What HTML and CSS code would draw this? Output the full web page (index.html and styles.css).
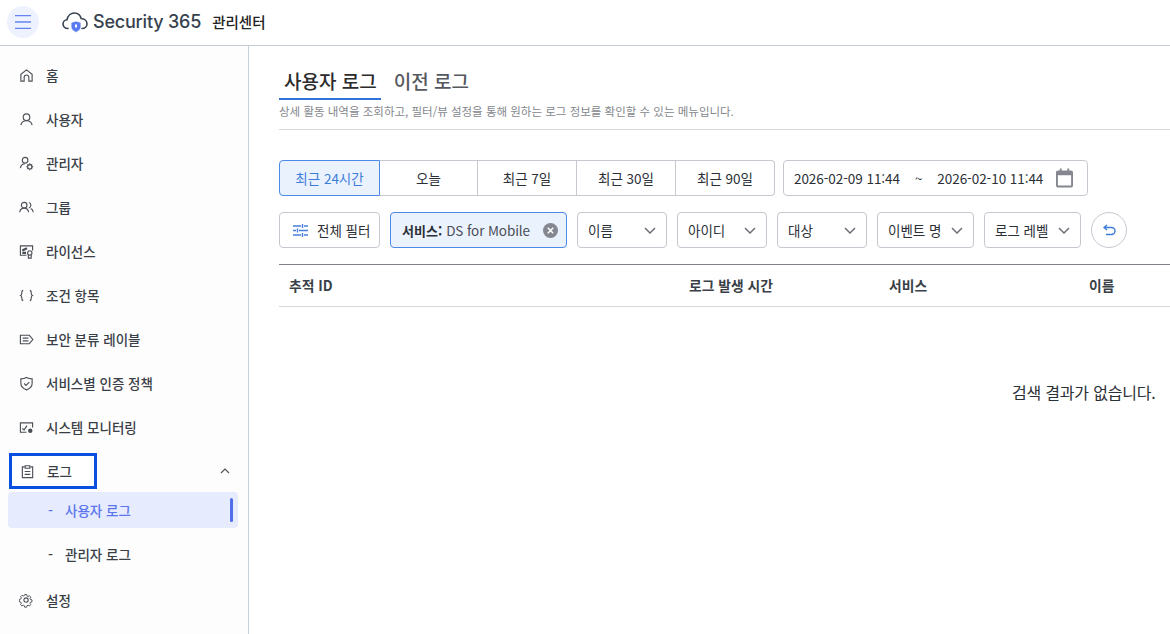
FILE: index.html
```html
<!DOCTYPE html>
<html lang="ko">
<head>
<meta charset="utf-8">
<title>Security 365 관리센터</title>
<link rel="stylesheet" href="styles.css">
</head>
<body>
<header class="topbar">
  <button class="menu-btn" aria-label="메뉴">
    <svg width="16" height="14" viewBox="0 0 16 14"><path d="M0 1h16M0 7.500h16M0 14h16" stroke="#6685f5" stroke-width="1.500" fill="none" transform="translate(0 -.5)"/></svg>
  </button>
  <div class="brand">
    <svg class="logo" width="26" height="22" viewBox="0 0 26 22" fill="none">
      <path d="M6 17.500C3 17.500 1 15.500 1 13c0-2.500 2-4.200 4-4.300C5.800 4.500 9 2 12.300 2c3.500 0 6 2.300 6.900 5.500 3 .2 5.800 2.300 5.800 5.300 0 2.700-2.200 4.700-5 4.700" stroke="#36424f" stroke-width="1.600" stroke-linecap="round"/>
      <path d="M9 11.500l5-1.500 5 1.500v4.500c0 2.500-2.500 4.200-5 5.500-2.500-1.300-5-3-5-5.500z" fill="#5b7cf0" stroke="#fff" stroke-width=".8"/>
      <rect x="13" y="13.500" width="2" height="3" fill="#fff"/>
    </svg>
    <span class="brand-name">Security 365</span>
    <span class="brand-sub">관리센터</span>
  </div>
</header>
<div class="shell">
  <nav class="sidebar">
    <a class="nav-item"><svg class="ico" viewBox="0 0 16 16"><path d="M2 14V6.800L8 2l6 4.800V14h-3.500v-4a2.500 2.500 0 0 0-5 0v4z"/></svg><span>홈</span></a>
    <a class="nav-item"><svg class="ico" viewBox="0 0 16 16"><circle cx="8" cy="5.500" r="3.500"/><path d="M2 14c.5-3 3-4.700 6-4.700s5.500 1.700 6 4.700"/></svg><span>사용자</span></a>
    <a class="nav-item"><svg class="ico" viewBox="0 0 16 16"><circle cx="6.500" cy="4.500" r="3"/><path d="M1.500 13c.4-3 2.500-4.800 5-4.800"/><circle cx="11.500" cy="11.500" r="2.300"/><path d="M11.500 7.800v1.400M11.500 13.800v1.400M7.800 11.500h1.400M13.800 11.500h1.400M9 9l1 1M13 13l1 1M14 9l-1 1M10 13l-1 1"/></svg><span>관리자</span></a>
    <a class="nav-item"><svg class="ico" viewBox="0 0 16 16"><circle cx="5.500" cy="5.500" r="3"/><path d="M.8 13c.3-2.800 2.200-4.300 4.700-4.300s4.400 1.500 4.700 4.300M10.500 2.600a3 3 0 0 1 0 5.800M12.500 9c1.500.6 2.500 2 2.700 4"/></svg><span>그룹</span></a>
    <a class="nav-item"><svg class="ico" viewBox="0 0 16 16"><path d="M8 12H1.500V2h13v5"/><path d="M3.500 7l5-2.500M3.500 9.500h4" stroke-width="2.500"/><circle cx="11.500" cy="9.500" r="2.300"/><path d="M10 11.500V15h3v-3.500"/></svg><span>라이선스</span></a>
    <a class="nav-item"><svg class="ico" viewBox="0 0 16 16"><path d="M4.500 2.500c-1.500 0-1.500 1-1.500 2.500S3 7.500 1.800 8c1.200.5 1.200 1.500 1.200 3s0 2.500 1.500 2.500M11.500 2.500c1.500 0 1.500 1 1.500 2.500s0 2.500 1.200 3c-1.200.5-1.200 1.500-1.200 3s0 2.500-1.500 2.500"/></svg><span>조건 항목</span></a>
    <a class="nav-item"><svg class="ico" viewBox="0 0 16 16"><path d="M1.500 3.500h9.500L14.800 8 11 12.500H1.500zM4 6.500h6M4 9.500h6"/></svg><span>보안 분류 레이블</span></a>
    <a class="nav-item"><svg class="ico" viewBox="0 0 16 16"><path d="M2 3c2.500 0 4.300-.5 6-1.500C9.700 2.500 11.500 3 14 3v5c0 3.500-2.800 5.500-6 6.800C4.800 13.500 2 11.500 2 8z"/><path d="M5.500 8l2 2 3.500-3.500"/></svg><span>서비스별 인증 정책</span></a>
    <a class="nav-item"><svg class="ico" viewBox="0 0 16 16"><path d="M8 13H1.500V3h13v5"/><path d="M3.500 9l2 1.500 3-4.500"/><circle class="ico-fill" cx="12" cy="11.500" r="3"/></svg><span>시스템 모니터링</span></a>
    <div class="nav-log">
      <a class="nav-item focus-item"><svg class="ico" viewBox="0 0 16 16"><path d="M5 3H2.500v11.500h11V3H11"/><path d="M5.500 1.800h5v2.700h-5zM5 8h6M5 11h6"/></svg><span>로그</span></a>
      <svg class="caret" width="10" height="6" viewBox="0 0 10 6"><path d="M1 5l4-4 4 4" fill="none" stroke="#555" stroke-width="1.200"/></svg>
    </div>
    <a class="sub-item active"><span class="dash">-</span><span>사용자 로그</span></a>
    <a class="sub-item"><span class="dash">-</span><span>관리자 로그</span></a>
    <a class="nav-item"><svg class="ico" viewBox="0 0 16 16"><path d="M6.700 1.500h2.600l.4 1.900 1.400.6 1.600-1 1.800 1.800-1 1.600.6 1.400 1.900.4v2.600l-1.900.4-.6 1.400 1 1.600-1.800 1.800-1.600-1-1.400.6-.4 1.900H6.700l-.4-1.900-1.400-.6-1.600 1-1.800-1.800 1-1.600-.6-1.400-1.900-.4V7.600l1.900-.4.600-1.400-1-1.600 1.800-1.800 1.600 1 1.400-.6z" transform="translate(.4 .4) scale(.84)"/><circle cx="7.500" cy="7.500" r="2.300"/></svg><span>설정</span></a>
  </nav>
  <main class="content">
    <div class="tabs">
      <h1 class="tab tab-on">사용자 로그</h1>
      <h2 class="tab">이전 로그</h2>
    </div>
    <p class="desc">상세 활동 내역을 조회하고, 필터/뷰 설정을 통해 원하는 로그 정보를 확인할 수 있는 메뉴입니다.</p>
    <div class="range-row">
      <div class="seg">
        <button class="seg-btn seg-on">최근 24시간</button>
        <button class="seg-btn w98">오늘</button>
        <button class="seg-btn">최근 7일</button>
        <button class="seg-btn">최근 30일</button>
        <button class="seg-btn">최근 90일</button>
      </div>
      <div class="dates">
        <span>2026-02-09 11:44</span><span class="tilde">~</span><span>2026-02-10 11:44</span>
        <svg class="cal" width="17" height="20" viewBox="0 0 18 20"><path fill="#84878f" d="M4 0h2v2h6V0h2v2h2a2 2 0 0 1 2 2v14a2 2 0 0 1-2 2H2a2 2 0 0 1-2-2V4a2 2 0 0 1 2-2h2zM2 7v11h14V7z"/></svg>
      </div>
    </div>
    <div class="filter-row">
      <button class="filter-all">
        <svg width="15" height="13" viewBox="0 0 15 13"><path d="M0 2h8M11 2h4M0 6.500h3M6 6.500h9M0 11h8M11 11h4M9.500 0v4M4.500 4.500v4M9.500 9v4" stroke="#4a7fe0" stroke-width="1.400" fill="none"/></svg>
        전체 필터
      </button>
      <div class="chip">
        <b>서비스:</b><span class="chip-val">DS for Mobile</span>
        <svg width="15" height="15" viewBox="0 0 15 15"><circle cx="7.500" cy="7.500" r="7.500" fill="#84878f"/><path d="M4.800 4.800l5.400 5.400M10.200 4.800l-5.400 5.400" stroke="#fff" stroke-width="1.500"/></svg>
      </div>
      <div class="sel w90">이름<svg class="chev" width="12" height="7" viewBox="0 0 12 7"><path d="M1 1l5 5 5-5"/></svg></div>
      <div class="sel w90">아이디<svg class="chev" width="12" height="7" viewBox="0 0 12 7"><path d="M1 1l5 5 5-5"/></svg></div>
      <div class="sel w90">대상<svg class="chev" width="12" height="7" viewBox="0 0 12 7"><path d="M1 1l5 5 5-5"/></svg></div>
      <div class="sel w97">이벤트 명<svg class="chev" width="12" height="7" viewBox="0 0 12 7"><path d="M1 1l5 5 5-5"/></svg></div>
      <div class="sel w97">로그 레벨<svg class="chev" width="12" height="7" viewBox="0 0 12 7"><path d="M1 1l5 5 5-5"/></svg></div>
      <button class="reset" aria-label="초기화"><svg width="13" height="12" viewBox="0 0 13 12" fill="none"><path d="M4 1L1 3.500 4 6M1 3.500h7.500a3.500 3.500 0 0 1 0 7H3" stroke="#3f7ddb" stroke-width="1.400"/></svg></button>
    </div>
    <div class="table">
      <div class="thead">
        <span class="c-id">추적 ID</span>
        <span class="c-col">로그 발생 시간</span>
        <span class="c-col">서비스</span>
        <span class="c-col">이름</span>
      </div>
      <p class="empty">검색 결과가 없습니다.</p>
    </div>
  </main>
</div>
</body>
</html>
```
FILE: styles.css
```css
* { box-sizing: border-box; }
html, body { margin: 0; height: 100%; overflow: hidden; }
body {
  font-family: "Noto Sans CJK KR", "Noto Sans", sans-serif;
  color: #2b2f36;
  background: #fff;
  font-size: 13.500px;
}
button { font-family: inherit; }

.topbar {
  height: 46px;
  display: flex;
  align-items: center;
  padding: 0 7px;
  border-bottom: 1px solid #c5ccd8;
}
.menu-btn {
  width: 32px;
  height: 32px;
  margin-top: -2px;
  border: 0;
  padding: 0;
  border-radius: 50%;
  background: #edf2fe;
  display: flex;
  align-items: center;
  justify-content: center;
}
.brand {
  display: flex;
  align-items: center;
  margin-left: 23px;
  margin-top: -2px;
}
.logo { margin-right: 5px; }
.brand-name {
  font-family: Inter, sans-serif;
  font-size: 18px;
  font-weight: 500;
  color: #36424f;
  letter-spacing: -.2px;
}
.brand-sub { margin-left: 11px; font-size: 14.500px; font-weight: 500; color: #222; }

.shell { display: flex; height: 588px; }
.sidebar {
  width: 249px;
  flex: none;
  border-right: 1px solid #c5d0dd;
  background: #fdfdfd;
  padding: 7px 10px 0 8px;
}
.nav-item {
  height: 44px;
  display: flex;
  align-items: center;
  gap: 12px;
  padding-left: 11px;
  font-size: 13.500px;
  font-weight: 500;
  color: #3a3f47;
}
.ico {
  width: 15px;
  height: 15px;
  flex: none;
  fill: none;
  stroke: #4b4f56;
  stroke-width: 1.200;
}
.ico-fill { fill: #4b4f56; stroke: #fff; }
.nav-log {
  height: 36px;
  margin-top: 4px;
  margin-bottom: 3px;
  display: flex;
  align-items: center;
  justify-content: space-between;
  padding-right: 8px;
}
.focus-item {
  width: 88px;
  height: 36px;
  margin-left: 1px;
  padding-left: 8px;
  border: 3px solid #0a50e0;
  background: #fff;
}
.caret { flex: none; }
.sub-item {
  height: 36px;
  margin-bottom: 8px;
  display: flex;
  align-items: center;
  padding-left: 40px;
  font-size: 13.500px;
  font-weight: 500;
  color: #3a3f47;
  border-radius: 4px;
}
.sub-item:not(.active) { margin-bottom: 6px; }
.dash { width: 17px; font-weight: 500; font-size: 14px; }
.sub-item.active {
  position: relative;
  background: #e6ebfd;
  color: #5a75ee;
}
.sub-item.active::after {
  content: "";
  position: absolute;
  right: 5px;
  top: 6px;
  width: 3px;
  height: 24px;
  border-radius: 2px;
  background: #4f6ee8;
}

.content { flex: 1; min-width: 0; padding: 20px 0 0 30px; overflow: hidden; }
.tabs { display: flex; gap: 8px; }
.tab {
  margin: 0;
  height: 34px;
  padding: 0 4px 0 5px;
  font-size: 19px;
  line-height: 30px;
  font-weight: 500;
  color: #55585e;
}
.tab-on { color: #2b2b2b; border-bottom: 2px solid #2f72d8; }
.desc {
  margin: 0;
  height: 30px;
  padding-top: 2px;
  line-height: 18px;
  font-size: 11.500px;
  color: #84878c;
  border-bottom: 1px solid #d6d8dc;
}
.range-row { display: flex; gap: 8px; margin-top: 30px; }
.seg { display: flex; }
.seg-btn {
  width: 99px;
  height: 36px;
  padding: 0;
  border: 1px solid #c6c8d0;
  border-left: 0;
  background: #fff;
  font-size: 13.500px;
  color: #2b2f36;
}
.seg-btn.w98 { width: 98px; }
.seg-btn:first-child { width: 101px; border-radius: 4px 0 0 4px; }
.seg-btn:last-child { border-radius: 0 4px 4px 0; }
.seg-btn.seg-on { background: #eaf2fe; border: 1px solid #4c8ae8; color: #3f7ddb; }
.dates {
  width: 305px;
  height: 36px;
  display: flex;
  align-items: center;
  padding: 0 14px 0 10px;
  border: 1px solid #c6c8d0;
  border-radius: 4px;
  color: #2b2f36;
  letter-spacing: -.06px;
}
.tilde { margin: 0 15px; }
.cal { margin-left: auto; }
.filter-row { display: flex; gap: 10px; margin-top: 16px; }
.filter-all {
  width: 101px;
  height: 36px;
  display: flex;
  align-items: center;
  gap: 9px;
  padding: 0 0 0 13px;
  border: 1px solid #c6c8d0;
  border-radius: 4px;
  background: #fff;
  font-size: 13.500px;
  color: #2b2f36;
}
.chip {
  width: 177px;
  height: 36px;
  display: flex;
  align-items: center;
  padding: 0 8px 0 11px;
  border: 1px solid #4c8ae8;
  border-radius: 4px;
  background: #eaf2fe;
  color: #2b2f36;
}
.chip b { font-weight: 700; font-size: 13px; }
.chip-val { margin-left: 4px; flex: 1; color: #4a4e55; letter-spacing: -.1px; }
.sel {
  height: 36px;
  display: flex;
  align-items: center;
  justify-content: space-between;
  padding: 0 10px 0 10px;
  border: 1px solid #c6c8d0;
  border-radius: 4px;
  color: #2b2f36;
}
.w90 { width: 90px; }
.w97 { width: 97px; }
.chev { fill: none; stroke: #6d7077; stroke-width: 1.500; flex: none; }
.reset {
  width: 36px;
  height: 36px;
  flex: none;
  padding: 0;
  border: 1px solid #c6c8d0;
  border-radius: 50%;
  background: #fff;
  display: flex;
  align-items: center;
  justify-content: center;
}
.table { margin-top: 16px; border-top: 1px solid #7d8087; width: 1000px; }
.thead {
  height: 42px;
  display: flex;
  align-items: center;
  padding: 0 0 2px 10px;
  border-bottom: 1px solid #d6d8dc;
  font-size: 13.800px;
  font-weight: 700;
  color: #3a3f47;
}
.c-id { width: 400px; flex: none; }
.c-col { width: 200px; flex: none; }
.empty {
  margin: 73px 0 0;
  padding-left: 733px;
  font-size: 16px;
  letter-spacing: -.2px;
  line-height: 24px;
  white-space: nowrap;
  color: #2b2f36;
}
```
